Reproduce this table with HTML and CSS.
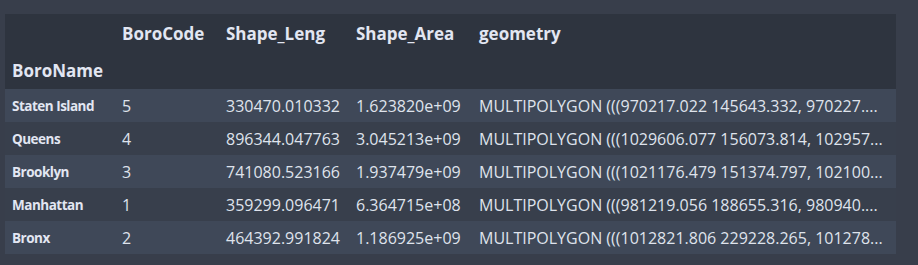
FILE: index.html
```html
<!DOCTYPE html>
<html>
<head>
<meta charset="utf-8">
<link rel="stylesheet" href="styles.css">
</head>
<body>
<div class="frame">
<table class="df">
  <colgroup>
    <col class="c-idx"><col class="c-code"><col class="c-leng"><col class="c-area"><col class="c-geom">
  </colgroup>
  <thead>
    <tr class="h1">
      <th></th><th>BoroCode</th><th>Shape_Leng</th><th>Shape_Area</th><th>geometry</th>
    </tr>
    <tr class="h2">
      <th>BoroName</th><th></th><th></th><th></th><th></th>
    </tr>
  </thead>
  <tbody>
    <tr class="odd"><th>Staten Island</th><td>5</td><td>330470.010332</td><td>1.623820e+09</td><td>MULTIPOLYGON (((970217.022 145643.332, 970227....</td></tr>
    <tr class="even"><th>Queens</th><td>4</td><td>896344.047763</td><td>3.045213e+09</td><td>MULTIPOLYGON (((1029606.077 156073.814, 102957...</td></tr>
    <tr class="odd"><th>Brooklyn</th><td>3</td><td>741080.523166</td><td>1.937479e+09</td><td>MULTIPOLYGON (((1021176.479 151374.797, 102100...</td></tr>
    <tr class="even"><th>Manhattan</th><td>1</td><td>359299.096471</td><td>6.364715e+08</td><td>MULTIPOLYGON (((981219.056 188655.316, 980940....</td></tr>
    <tr class="odd"><th>Bronx</th><td>2</td><td>464392.991824</td><td>1.186925e+09</td><td>MULTIPOLYGON (((1012821.806 229228.265, 101278...</td></tr>
  </tbody>
</table>
</div>
</body>
</html>
```

FILE: styles.css
```css
html, body {
  margin: 0;
  padding: 0;
  background: #383e4b;
}
.frame {
  padding: 14px 0 0 5px;
  height: 251px;
}
.df {
  border-collapse: collapse;
  table-layout: fixed;
  width: 891px;
  font-family: "Open Sans", "Noto Sans", sans-serif;
  color: #dfe3ec;
}
.c-idx { width: 110px; }
.c-code { width: 104px; }
.c-leng { width: 130px; }
.c-area { width: 123px; }
.c-geom { width: 424px; }
.df th, .df td {
  padding: 0 0 0 7px;
  text-align: left;
  white-space: nowrap;
  overflow: hidden;
}
.df thead tr { background: #2e343f; }
.df thead th {
  font-size: 17px;
  font-weight: 700;
  color: #e2e6f2;
}
.df .h1 { height: 38px; }
.df .h2 { height: 37px; }
.df .h1 th { vertical-align: middle; }
.df tbody tr { height: 33px; }
.df tbody th {
  font-size: 13.5px;
  letter-spacing: -0.5px;
  font-weight: 700;
  color: #e2e6f2;
}
.df td {
  font-size: 16px;
  font-weight: 400;
}
.df tr.odd { background: #3f4858; }
.df tr.even { background: #383f4c; }
```
